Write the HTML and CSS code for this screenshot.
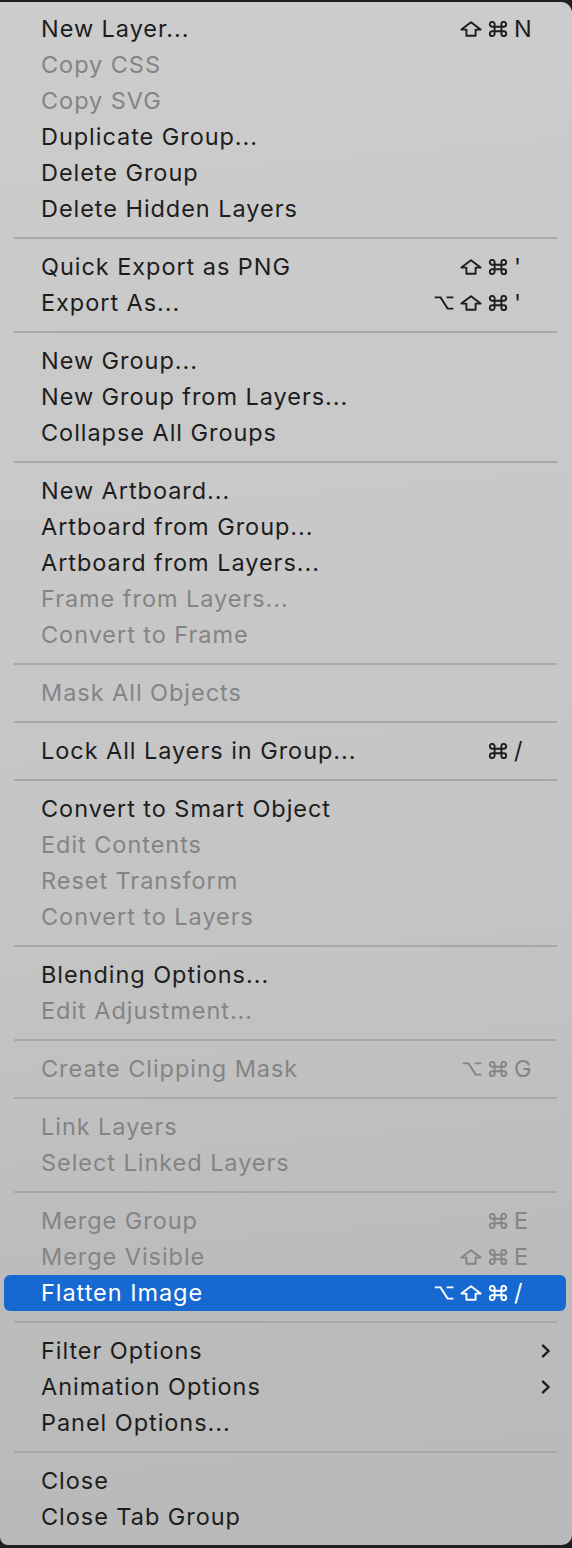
FILE: index.html
```html
<!DOCTYPE html>
<html>
<head>
<meta charset="utf-8">
<link rel="stylesheet" href="styles.css">
</head>
<body>
<svg width="0" height="0" style="position:absolute">
  <defs>
    <symbol id="k-shift" viewBox="0 0 22 16"><path d="M11 1.2 L20.6 8.6 L15.6 8.6 L15.6 14.8 L6.4 14.8 L6.4 8.6 L1.4 8.6 Z" fill="none" stroke="currentColor" stroke-width="1.9" stroke-linejoin="round"/></symbol>
    <symbol id="k-cmd" viewBox="0 0 20 16"><path d="M6.6 3.3 A2.4 2.4 0 1 0 4.2 5.7 L15.8 5.7 A2.4 2.4 0 1 0 13.4 3.3 L13.4 12.7 A2.4 2.4 0 1 0 15.8 10.3 L4.2 10.3 A2.4 2.4 0 1 0 6.6 12.7 Z" fill="none" stroke="currentColor" stroke-width="1.9"/></symbol>
    <symbol id="k-opt" viewBox="0 0 20 16"><path d="M0.8 2.4 H6.6 L13.6 13.6 H19.4 M12.6 2.4 H19.4" fill="none" stroke="currentColor" stroke-width="1.9"/></symbol>
    <symbol id="chev" viewBox="0 0 10 14"><path d="M2 1.6 L7.6 7 L2 12.4" fill="none" stroke="currentColor" stroke-width="2.4" stroke-linecap="round" stroke-linejoin="round"/></symbol>
  </defs>
</svg>
<div class="menu">
  <div class="item"><span class="label">New Layer...</span><span class="sc"><span class="mods"><svg class="m w22"><use href="#k-shift"/></svg><svg class="m"><use href="#k-cmd"/></svg></span><span class="key">N</span></span></div>
  <div class="item off"><span class="label">Copy CSS</span></div>
  <div class="item off"><span class="label">Copy SVG</span></div>
  <div class="item"><span class="label">Duplicate Group...</span></div>
  <div class="item"><span class="label">Delete Group</span></div>
  <div class="item"><span class="label">Delete Hidden Layers</span></div>
  <div class="sep"></div>
  <div class="item"><span class="label">Quick Export as PNG</span><span class="sc"><span class="mods"><svg class="m w22"><use href="#k-shift"/></svg><svg class="m"><use href="#k-cmd"/></svg></span><span class="key">'</span></span></div>
  <div class="item"><span class="label">Export As...</span><span class="sc"><span class="mods"><svg class="m"><use href="#k-opt"/></svg><svg class="m w22"><use href="#k-shift"/></svg><svg class="m"><use href="#k-cmd"/></svg></span><span class="key">'</span></span></div>
  <div class="sep"></div>
  <div class="item"><span class="label">New Group...</span></div>
  <div class="item"><span class="label">New Group from Layers...</span></div>
  <div class="item"><span class="label">Collapse All Groups</span></div>
  <div class="sep"></div>
  <div class="item"><span class="label">New Artboard...</span></div>
  <div class="item"><span class="label">Artboard from Group...</span></div>
  <div class="item"><span class="label">Artboard from Layers...</span></div>
  <div class="item off"><span class="label">Frame from Layers...</span></div>
  <div class="item off"><span class="label">Convert to Frame</span></div>
  <div class="sep"></div>
  <div class="item off"><span class="label">Mask All Objects</span></div>
  <div class="sep"></div>
  <div class="item"><span class="label">Lock All Layers in Group...</span><span class="sc"><span class="mods"><svg class="m"><use href="#k-cmd"/></svg></span><span class="key">/</span></span></div>
  <div class="sep"></div>
  <div class="item"><span class="label">Convert to Smart Object</span></div>
  <div class="item off"><span class="label">Edit Contents</span></div>
  <div class="item off"><span class="label">Reset Transform</span></div>
  <div class="item off"><span class="label">Convert to Layers</span></div>
  <div class="sep"></div>
  <div class="item"><span class="label">Blending Options...</span></div>
  <div class="item off"><span class="label">Edit Adjustment...</span></div>
  <div class="sep"></div>
  <div class="item off"><span class="label">Create Clipping Mask</span><span class="sc"><span class="mods"><svg class="m"><use href="#k-opt"/></svg><svg class="m"><use href="#k-cmd"/></svg></span><span class="key">G</span></span></div>
  <div class="sep"></div>
  <div class="item off"><span class="label">Link Layers</span></div>
  <div class="item off"><span class="label">Select Linked Layers</span></div>
  <div class="sep"></div>
  <div class="item off"><span class="label">Merge Group</span><span class="sc"><span class="mods"><svg class="m"><use href="#k-cmd"/></svg></span><span class="key">E</span></span></div>
  <div class="item off"><span class="label">Merge Visible</span><span class="sc"><span class="mods"><svg class="m w22"><use href="#k-shift"/></svg><svg class="m"><use href="#k-cmd"/></svg></span><span class="key">E</span></span></div>
  <div class="item active"><span class="label">Flatten Image</span><span class="sc"><span class="mods"><svg class="m"><use href="#k-opt"/></svg><svg class="m w22"><use href="#k-shift"/></svg><svg class="m"><use href="#k-cmd"/></svg></span><span class="key">/</span></span></div>
  <div class="sep"></div>
  <div class="item"><span class="label">Filter Options</span><svg class="chev"><use href="#chev"/></svg></div>
  <div class="item"><span class="label">Animation Options</span><svg class="chev"><use href="#chev"/></svg></div>
  <div class="item"><span class="label">Panel Options...</span></div>
  <div class="sep"></div>
  <div class="item"><span class="label">Close</span></div>
  <div class="item"><span class="label">Close Tab Group</span></div>
</div>
</body>
</html>
```
FILE: styles.css
```css
html, body {
  margin: 0;
  padding: 0;
}
body {
  background: #1f1f1f;
  width: 572px;
  height: 1548px;
  overflow: hidden;
  padding-top: 2px;
  box-sizing: border-box;
  font-family: "Inter", "Noto Sans", "DejaVu Sans", sans-serif;
}
.menu {
  height: 1543px;
  box-sizing: border-box;
  padding: 9px 0 10px 0;
  border-radius: 0 11px 10px 8px;
  background: linear-gradient(175deg, #cccccc 0%, #c8c8c8 35%, #c4c4c4 60%, #bcbcbc 80%, #b9b9b9 100%);
  display: flex;
  flex-direction: column;
}
.item {
  height: 36px;
  box-sizing: border-box;
  margin: 0 6px 0 4px;
  padding: 0 0 2px 37px;
  display: flex;
  align-items: center;
  border-radius: 6px;
  color: #1d1d1d;
  font-size: 23.5px;
  letter-spacing: 0.95px;
}
.item.off {
  color: #848484;
}
.item.active {
  background: #1769d2;
  color: #ffffff;
}
.label {
  flex: 1;
  white-space: nowrap;
}
.sc {
  display: flex;
  align-items: center;
}
.mods {
  display: flex;
  align-items: center;
  gap: 6px;
  margin-right: 6px;
  padding-top: 2px;
}
.m {
  width: 20px;
  height: 16px;
  display: block;
}
.m.w22 {
  width: 22px;
}
.key {
  width: 52px;
  letter-spacing: 0;
}
.chev {
  width: 10px;
  height: 14px;
  margin-right: 15px;
  margin-top: 2px;
  color: #1c1c1c;
}
.sep {
  height: 22px;
  display: flex;
  align-items: center;
  padding: 0 15px 0 14px;
}
.sep::before {
  content: "";
  display: block;
  flex: 1;
  height: 2px;
  background: #a8a8a8;
}
```
